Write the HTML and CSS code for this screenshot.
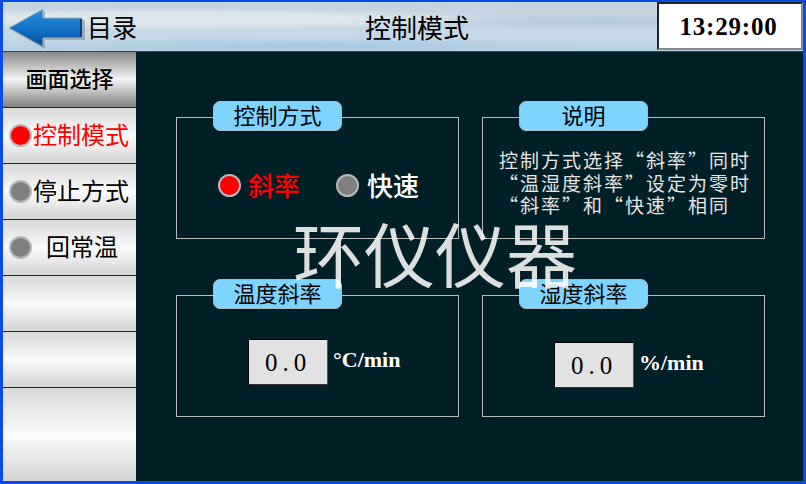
FILE: index.html
```html
<!DOCTYPE html>
<html lang="zh-CN">
<head>
    <meta charset="UTF-8">
    <meta name="viewport" content="width=device-width, initial-scale=1.0">
    <title>控制模式</title>
    <link rel="stylesheet" href="styles.css">
</head>
<body>
    <div class="screen">
        <div class="header">
            <div class="back">
                <svg class="back-arrow" width="84" height="49" viewBox="3 2 84 49">
                    <defs>
                        <linearGradient id="arrowFill" x1="0" y1="0" x2="0" y2="1">
                            <stop offset="0" stop-color="#2f8fdc"/>
                            <stop offset="0.55" stop-color="#0f6fc4"/>
                            <stop offset="1" stop-color="#0b4f9c"/>
                        </linearGradient>
                    </defs>
                    <path d="M11 30 L45 11 L45 20 L85 20 L85 40 L45 40 L45 49 Z" fill="#6f7f8b" opacity="0.5"/>
                    <path d="M9 28 L43 9 L43 18 L82 18 L82 38 L43 38 L43 47 Z" fill="url(#arrowFill)" stroke="#a8b3a6" stroke-width="1"/>
                    <path d="M80 19 L82 19 L82 37 L80 37 Z" fill="#0a3f80"/>
                </svg>
                <span class="back-label">目录</span>
            </div>
            <div class="title">控制模式</div>
            <div class="clock">13:29:00</div>
        </div>

        <div class="body">
            <div class="sidebar">
                <div class="side-head">画面选择</div>
                <div class="side-item active"><i class="lamp on"></i><span class="side-text">控制模式</span></div>
                <div class="side-item"><i class="lamp"></i><span class="side-text">停止方式</span></div>
                <div class="side-item wide"><i class="lamp"></i><span class="side-text">回常温</span></div>
                <div class="side-item"></div>
                <div class="side-item"></div>
                <div class="side-item last"></div>
            </div>

            <div class="main">
                <div class="panel">
                    <div class="tag">控制方式</div>
                    <div class="panel-body modes">
                        <span class="mode on"><i class="lamp on"></i><span class="mode-text">斜率</span></span>
                        <span class="mode"><i class="lamp"></i><span class="mode-text">快速</span></span>
                    </div>
                </div>
                <div class="panel">
                    <div class="tag">说明</div>
                    <div class="panel-body note">
                        控制方式选择“斜率”同时<br>
                        “温湿度斜率”设定为零时<br>
                        “斜率”和“快速”相同
                    </div>
                </div>
                <div class="panel">
                    <div class="tag">温度斜率</div>
                    <div class="panel-body rate">
                        <span class="value">0.0</span>
                        <span class="unit">°C/min</span>
                    </div>
                </div>
                <div class="panel">
                    <div class="tag">湿度斜率</div>
                    <div class="panel-body rate low">
                        <span class="value">0.0</span>
                        <span class="unit">%/min</span>
                    </div>
                </div>
                <div class="watermark">环仪仪器</div>
            </div>
        </div>
    </div>
</body>
</html>
```

FILE: styles.css
```css
html, body {
    margin: 0;
    padding: 0;
}
body {
    width: 806px;
    height: 484px;
    overflow: hidden;
    font-family: "Noto Sans CJK SC", sans-serif;
}
.screen {
    box-sizing: border-box;
    width: 806px;
    height: 484px;
    border: 3px solid #0a4be6;
    border-top-width: 2px;
    display: flex;
    flex-direction: column;
    background: #011f27;
}

/* top bar */
.header {
    height: 49px;
    flex: none;
    display: flex;
    align-items: flex-start;
    background:
        radial-gradient(ellipse 330px 11px at 170px 17px, #dde6ec 0%, #dde6ec 55%, rgba(221,230,236,0) 100%),
        radial-gradient(ellipse 220px 9px at 600px 20px, #b2cbdf 0%, rgba(178,203,223,0) 100%),
        radial-gradient(ellipse 300px 8px at 300px 44px, #a9c8e0 0%, rgba(169,200,224,0) 100%),
        linear-gradient(#c3d2e0, #c9d6e3 40%, #c5d9e8 70%, #b6d1e5);
    border-bottom: 1px solid #22475a;
}
.back {
    width: 136px;
    height: 49px;
    flex: none;
    display: flex;
    align-items: center;
}
.back-arrow {
    flex: none;
}
.back-label {
    margin: -1px 0 0 0;
    font-size: 25px;
    color: #000;
}
.title {
    flex: 1;
    height: 49px;
    line-height: 50px;
    text-align: center;
    font-size: 26px;
    color: #000;
    padding-left: 38px;
}
.clock {
    width: 146px;
    height: 48px;
    box-sizing: border-box;
    flex: none;
    background: #fff;
    border: 2px solid #222;
    border-right-color: #888;
    border-bottom-color: #888;
    font-family: "Liberation Serif", serif;
    font-weight: bold;
    font-size: 25px;
    letter-spacing: 0.8px;
    line-height: 46px;
    text-align: center;
    padding-right: 3px;
}

/* left menu */
.body {
    flex: 1;
    display: flex;
    min-height: 0;
}
.sidebar {
    width: 133px;
    flex: none;
    display: flex;
    flex-direction: column;
}
.side-head {
    height: 55px;
    flex: none;
    background: linear-gradient(#8a8a8a, #f4f4f4 50%, #7f7f7f);
    border-bottom: 1px solid #1b2a30;
    font-size: 22px;
    font-weight: 500;
    color: #000;
    text-align: center;
    line-height: 51px;
}
.side-item {
    height: 55px;
    flex: none;
    border-bottom: 1px solid #1b2a30;
    background: linear-gradient(#d8d8d8, #fbfbfb 50%, #d4d4d4);
    display: flex;
    align-items: center;
    padding-left: 6px;
    font-size: 24px;
    color: #000;
    white-space: nowrap;
}
.side-text {
    margin-top: -4px;
}
.side-item.active {
    color: #f00;
}
.side-item.wide .lamp {
    margin-right: 14px;
}
.side-item.last {
    flex: 1;
    border-bottom: none;
}
.lamp {
    display: block;
    flex: none;
    width: 19px;
    height: 19px;
    border-radius: 50%;
    background: #808080;
    border: 2px solid #b9b9b9;
    margin-right: 1px;
}
.lamp.on {
    background: #f00;
}

/* panels */
.main {
    position: relative;
    flex: 1;
    display: grid;
    grid-template-columns: 283px 283px;
    grid-template-rows: 122px 122px;
    column-gap: 23px;
    row-gap: 56px;
    align-content: start;
    padding: 65px 0 0 40px;
}
.panel {
    border: 1px solid #b9bdbd;
    display: flex;
    flex-direction: column;
}
.tag {
    flex: none;
    width: 129px;
    height: 30px;
    box-sizing: border-box;
    margin: -17px 0 0 36px;
    background: #7fd4ff;
    border: 1px solid #a9bcc6;
    border-radius: 7px;
    text-align: center;
    font-size: 22px;
    line-height: 25px;
    color: #000;
}
.panel-body {
    flex: 1;
    display: flex;
    align-items: center;
}
.modes {
    padding: 2px 0 0 41px;
    font-size: 26px;
    color: #fff;
}
.mode {
    display: flex;
    align-items: center;
    margin-right: 36px;
    font-weight: 500;
}
.mode .lamp {
    margin-right: 8px;
}
.mode.on .lamp {
    margin-right: 7px;
}
.mode-text {
    margin-top: -3px;
}
.mode.on {
    color: #f00;
}
.note {
    display: block;
    padding: 18px 0 0 16px;
    font-size: 19px;
    letter-spacing: 2px;
    line-height: 22.5px;
    color: #e6e6e6;
    white-space: nowrap;
}
.rate {
    padding: 0 0 1px 71px;
}
.rate.low {
    padding: 5px 0 0 71px;
}
.value {
    width: 80px;
    height: 46px;
    box-sizing: border-box;
    background: #e2e2e2;
    border: 1px solid #000;
    border-right-color: #555;
    border-bottom-color: #333;
    font-family: "Liberation Serif", serif;
    font-size: 25px;
    line-height: 46px;
    text-align: center;
    letter-spacing: 5px;
    color: #000;
}
.unit {
    margin-left: 5px;
    margin-top: -4px;
    font-family: "Liberation Serif", serif;
    font-weight: bold;
    font-size: 22px;
    color: #fff;
}
.watermark {
    position: absolute;
    left: 157px;
    top: 159px;
    font-size: 71px;
    line-height: 80px;
    color: rgba(255, 255, 255, 0.86);
    white-space: nowrap;
    pointer-events: none;
}
```
